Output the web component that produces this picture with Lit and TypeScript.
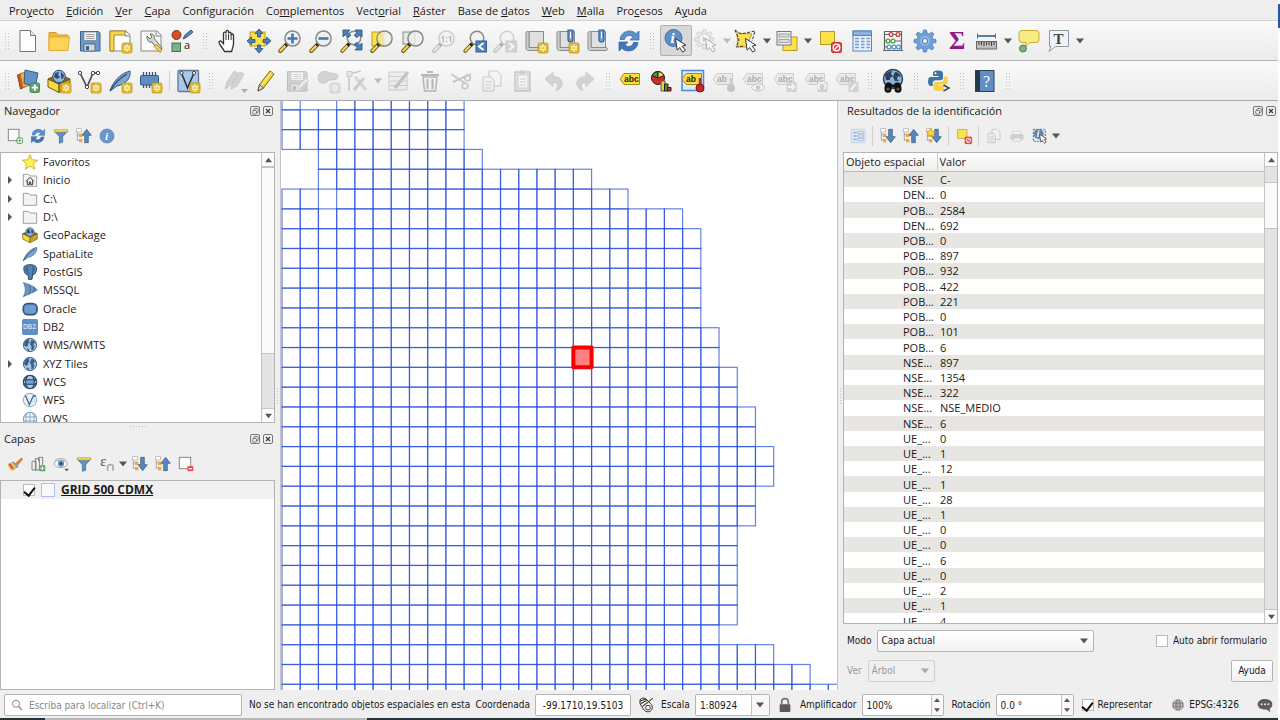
import { LitElement, html, css, svg, nothing, type TemplateResult } from "lit";
import { customElement } from "lit/decorators.js";
import { classMap } from "lit/directives/class-map.js";

type Glyph = ReturnType<typeof svg>;

/* ---------- shared icon pieces ---------- */
const badge = svg`
  <rect x="14" y="14" width="10" height="10" rx="1.6" fill="#e3bd2c" stroke="#b8941a" stroke-width=".8"/>
  <path d="M19 15.6v6.8M16 17.3l6 3.4M22 17.3l-6 3.4" stroke="#fff" stroke-width="1.3"/>
  <circle cx="19" cy="19" r="1.1" fill="#e3bd2c"/>`;
const plusBadge = svg`
  <rect x="14" y="14" width="9.5" height="9.5" rx="1.6" fill="#5fa570" stroke="#35784a" stroke-width=".8"/>
  <path d="M18.8 15.6v6.2M15.7 18.7h6.2" stroke="#fff" stroke-width="1.8"/>`;
const cursor = svg`<path d="M11.5 9.5l1.6 11.6 2.6-2.4 3 4.4 2.6-1.8-3-4.2 3.6-.9z" fill="#fff" stroke="#333" stroke-width="1" stroke-linejoin="round"/>`;
const lens = svg`
  <path d="M8.6 15.4L2.2 22" stroke="#6b5a1c" stroke-width="4" stroke-linecap="round"/>
  <path d="M8 16L2.4 21.8" stroke="#f6d94c" stroke-width="2.2" stroke-linecap="round"/>
  <path d="M9.3 14.7L7.4 16.6" stroke="#222" stroke-width="3.4"/>
  <circle cx="14.5" cy="9.5" r="7.6" fill="#eef0ee" fill-opacity=".8" stroke="#8a8a8a" stroke-width="1.5"/>`;
const smallLens = svg`
  <path d="M8.6 15.4L2.2 22" stroke="#6b5a1c" stroke-width="3.8" stroke-linecap="round"/>
  <path d="M8 16L2.4 21.8" stroke="#f6d94c" stroke-width="2" stroke-linecap="round"/>
  <path d="M9.3 14.7L7.4 16.6" stroke="#222" stroke-width="3.2"/>
  <circle cx="14" cy="9" r="6.8" fill="#f1f2f1" stroke="#8a8a8a" stroke-width="1.5"/>`;
const paper = svg`
  <path d="M5 2.500h14.500v17H5z" fill="#dfe1e0" stroke="#8a8a8a"/>
  <path d="M2 3.500c0-1.400 3-1.400 3 0v15H20.500c1.200 0 1.200 3 0 3H4.500c-1.600 0-2.500-1-2.500-2.500z" fill="#cfd2d1" stroke="#8a8a8a"/>`;
const clip = svg`<path d="M13 1h5v9.500a2.500 2.500 0 0 1-5 0z" fill="#6d9ad0" stroke="#315e94" stroke-width="1.200"/><path d="M15.500 3v6.500" stroke="#fff"/>`;
const globe = svg`
  <circle cx="12" cy="12" r="10" fill="#a9c6e6" stroke="#3b5f86" stroke-width="1.400"/>
  <path d="M4 7c2-3 5-4 7-4l-1 3 2 2-3 2v3l-3 2-3-3zM14 4c3 0 6 3 7 6l-3-1-1 3 2 2-2 5-3 1v-6l-2-3zM7 17l3 1 1 3-3-1z" fill="#3b5f86"/>`;
const labelTag = (t: string) => svg`
  <path d="M5 4.500h15.500v11H5L1 10z" fill="#fbdf3f" stroke="#a08a1c" stroke-linejoin="round"/>
  <text x="5" y="13" font-family="Liberation Sans" font-weight="bold" font-size="8.500" fill="#222">${t}</text>`;
const treeMark = svg`
  <path d="M2 3h7M2 3v16M2 10h5M2 18h5" stroke="#999" stroke-width="1.200" fill="none"/>
  <rect x="1" y="1" width="7" height="5" fill="#fff" stroke="#aaa"/>
  <rect x="4.500" y="8.500" width="5" height="5" fill="#f6a63c"/><rect x="4.500" y="16.500" width="5" height="5" fill="#f6a63c"/>`;
const arrowDown = svg`<path d="M13 2h5.500v11H23l-7 9-7-9h4z" fill="#5a86bb" stroke="#2f5680"/>`;
const arrowUp = svg`<path d="M13 22h5.500V11H23l-7-9-7 9h4z" fill="#5a86bb" stroke="#2f5680"/>`;
const refreshArrows = svg`
  <path d="M3 10.500C3.500 5.500 7.500 2 12.500 2c2.800 0 5 1 6.500 2.700L22 2v9h-9l3.200-3C13 5.500 8.500 6 7.500 10.500z" fill="#5c8fcc" stroke="#356aa8" stroke-width=".7"/>
  <path d="M21 13.500c-.5 5-4.500 8.500-9.500 8.500-2.800 0-5-1-6.500-2.700L2 22v-9h9l-3.200 3c3.200 2.500 7.700 2 8.700-2.500z" fill="#4478b8" stroke="#2d5f9c" stroke-width=".7"/>`;
const funnel = svg`
  <path d="M2 5h20l-7.500 8v8.500l-5 1.500V13z" fill="#5e8fc2" stroke="#3d6b9c"/>
  <path d="M2 2.500h20v3.500H2z" fill="#f7e05a" stroke="#b79b25"/>`;
const clipboardPage = svg`<path d="M9 2h8l4 4v11H9z" fill="#f6f6f6" stroke="#777"/><path d="M3 8h8l3 3v11H3z" fill="#eee" stroke="#777"/><path d="M5.500 13h6M5.500 16h6M5.500 19h6" stroke="#888"/>`;
const box = svg`
  <path d="M1 10l11 5v8.500L1 18z" fill="#f7d944" stroke="#6e5a0c"/><path d="M23 10l-11 5v8.500L23 18z" fill="#cda51d" stroke="#6e5a0c"/>
  <path d="M1 10l11-5 11 5-11 5z" fill="#856d16" stroke="#6e5a0c"/>
  <circle cx="12" cy="7.500" r="6.300" fill="#8fb3dc" stroke="#2d4d74"/><path d="M8 4l4-1-1 3 2 2-3 2-3-2zM14 3l3 3-1 4-2-1z" fill="#2d4d74"/>`;
const feather = svg`
  <path d="M2 22C5 13 11 5 22 2c1 6-3 13-13 15z" fill="#7ea6d2" stroke="#2f5a8c" stroke-linejoin="round"/>
  <path d="M2 22C6 15 12 9 19 5" stroke="#2f4a6c" stroke-width="1.300" fill="none"/>`;
const vMark = svg`
  <path d="M3 4l7 14L16 4h5" stroke="#444" stroke-width="1.600" fill="none"/>
  <circle cx="3" cy="4" r="1.700" fill="#fff" stroke="#444"/><circle cx="16" cy="4" r="1.700" fill="#fff" stroke="#444"/><circle cx="21" cy="4" r="1.700" fill="#fff" stroke="#444"/><circle cx="10" cy="18" r="1.700" fill="#fff" stroke="#444"/>`;
const pencil = svg`<path d="M4 22l1.500-6.500L16 2l4 3L9.500 19z" fill="#f4d63e" stroke="#7d6a1e"/><path d="M4 22l1.500-6.500 4 3.500z" fill="#ddd" stroke="#555"/><path d="M7 17L17.500 3.500" stroke="#fff08a"/>`;
const floppy = svg`
  <path d="M2.500 2.500h18l1.500 1.500v18h-19.500z" fill="#6e97c8" stroke="#3c658f"/>
  <rect x="6" y="3" width="12.500" height="8.500" fill="#f3f3f3" stroke="#6a7d92" stroke-width=".7"/><path d="M8 5.500h8.500M8 7.500h8.500M8 9.500h8.500" stroke="#888" stroke-width=".8"/>
  <rect x="6" y="15" width="11" height="7" fill="#d5d8da" stroke="#55708c"/><rect x="8" y="17" width="3" height="4" fill="#3c658f"/>`;
const square = svg`<rect x="2.500" y="2.500" width="14" height="13" fill="#fbe24a" stroke="#b99a1e"/>`;
const noEntry = svg`<rect x="13.500" y="13.500" width="10" height="10" rx="1.500" fill="#df4a4a" stroke="#c33"/><circle cx="18.500" cy="18.500" r="3.300" fill="none" stroke="#fff" stroke-width="1.300"/><path d="M16.300 20.700l4.400-4.400" stroke="#fff" stroke-width="1.300"/>`;
const info = svg`<circle cx="12" cy="12" r="10.500" fill="#6896cd" stroke="#4a79b0"/><text x="9" y="18" font-family="Liberation Serif" font-style="italic" font-weight="bold" font-size="17" fill="#fff">i</text>`;
const gearPath = "M10.500 1h3l.6 3.200 2 .8L18.800 3 21 5.200l-1.900 2.700.8 2L23 10.500v3l-3.100.6-.8 2 1.900 2.700-2.200 2.200-2.700-1.900-2 .8-.6 3.100h-3l-.6-3.100-2-.8L5.200 21 3 18.800l1.900-2.700-.8-2L1 13.500v-3l3.100-.6.8-2L3 5.200 5.200 3l2.700 1.900 2-.8z";
const folder = svg`<path d="M2 3.500h8l2 2.500h10v15.500H2z" fill="#f3f3f3" stroke="#9a9a9a" stroke-width="1.400" stroke-linejoin="round"/>`;

const ICONS: Record<string, Glyph> = {
  newProject: svg`<path d="M4 1.500h10.500l5 5v16H4z" fill="#fff" stroke="#777"/><path d="M14.500 1.500v5h5" fill="#eee" stroke="#777"/>`,
  open: svg`<path d="M2 3.500h7l2 2.500h10v4H6L2 21z" fill="#f0b93a" stroke="#d79b20"/><path d="M2 21.500V7l1 1h19.500l-1.500 13.500z" fill="#fcd558" stroke="#e2ad2d"/>`,
  save: floppy,
  newLayout: svg`<path d="M2 2h16l4 4v16H2z" fill="#fff" stroke="#888"/><path d="M2 2h16v4H6v16H2z" fill="#f9d951" stroke="#a8871c"/><path d="M17 2v5h5" fill="#eee" stroke="#888"/>${badge}`,
  layoutManager: svg`<path d="M2 2h16l4 4v16H2z" fill="#fafafa" stroke="#888"/><path d="M17 2v5h5" fill="#eee" stroke="#888"/><path d="M8 7l3 3 2-2-2-3c3-.5 5 2 4.300 4.500L23 19l-2.500 3.500L13 13c-3 .8-5.500-2-5-6z" fill="#d7d9da" stroke="#666"/><path d="M17 15.500l6 5-2 3-6-6z" fill="#f2d443" stroke="#8b7620" stroke-width=".7"/>`,
  styles: svg`<circle cx="6.500" cy="6" r="4.500" fill="#cf4f27" stroke="#8f3010"/><path d="M13 10l2-4 6-5 2 2-6 5z" fill="#5c88bd" stroke="#2f5680"/><rect x="2" y="14" width="8.500" height="8.500" fill="#79b188" stroke="#3c7750"/><text x="14" y="20" font-family="Open Sans" font-size="11" fill="#222">a</text>`,
  hand: svg`<path d="M8.500 22.500C7 19 3.500 16.500 3 13.500c-.2-1.600 1.500-2 2.500-.8l2 2V4.500c0-1.800 2.500-1.800 2.500 0V2.800c0-1.800 2.600-1.800 2.600 0v1.700c0-1.700 2.500-1.700 2.500 0v1.700c0-1.600 2.400-1.600 2.400 0v8.300c0 3-1.500 5-1.800 8z" fill="#fff" stroke="#333" stroke-width="1.300"/><path d="M10 5v6M12.600 5v6M15.100 6v5" stroke="#333"/>`,
  panSelection: svg`<rect x="3" y="3" width="15" height="14" fill="#fbe24a" stroke="#b99a1e"/><g fill="#4d7fb8" stroke="#274f7d" stroke-width=".8"><path d="M12 0l4 4.500h-2.500V8h-3V4.500H8zM12 24l4-4.500h-2.500V16h-3v3.500H8zM0 12l4.500-4v2.500H8v3H4.500V16zM24 12l-4.500-4v2.500H16v3h3.500V16z"/></g>`,
  zoomIn: svg`${lens}<path d="M14.500 4.500v10M9.500 9.500h10" stroke="#4478b4" stroke-width="2.600"/>`,
  zoomOut: svg`${lens}<path d="M9.500 9.500h10" stroke="#4478b4" stroke-width="2.600"/>`,
  zoomFull: svg`${smallLens}<g fill="#4d7fb8" stroke="#274f7d" stroke-width=".8"><path d="M3 1h7L7.800 3.200l3 3-2.600 2.600-3-3L3 8zM22 1v7l-2.200-2.200-3 3-2.600-2.600 3-3L15 1zM22 21h-7l2.200-2.200-3-3 2.600-2.600 3 3L22 14z"/></g>`,
  zoomSelection: svg`<rect x="2" y="3" width="12" height="14" fill="#fbe24a" stroke="#b99a1e"/>${lens}<path d="M9 5h5v11a7 7 0 0 1-5-11z" fill="#f5e58a"/>`,
  zoomLayer: svg`<rect x="2" y="3" width="12" height="12" fill="#e6e6e6" stroke="#8a8a8a"/>${lens}`,
  zoomNative: svg`${lens}<text x="8.500" y="12.800" font-family="Open Sans" font-weight="bold" font-size="8.500" fill="#444">1:1</text>`,
  zoomLast: svg`${smallLens}<rect x="13" y="12" width="10.500" height="11" fill="#4f82bd" stroke="#2f5f96"/><path d="M20.500 14l-4.500 3.500 4.500 3.500" stroke="#fff" stroke-width="2" fill="none"/>`,
  zoomNext: svg`${smallLens}<rect x="13" y="12" width="10.500" height="11" fill="#9a9a9a" stroke="#888"/><path d="M16 14l4.500 3.500L16 21" stroke="#fff" stroke-width="2" fill="none"/>`,
  newView: svg`${paper}${badge}`,
  newBookmark: svg`${paper}${clip}${badge}`,
  bookmarks: svg`${paper}${clip}`,
  refresh: refreshArrows,
  identify: svg`<circle cx="9.500" cy="9" r="8.500" fill="#5f8fc9" stroke="#3f70aa"/><text x="6.500" y="14" font-family="Liberation Serif" font-style="italic" font-weight="bold" font-size="15" fill="#fff">i</text>${cursor}`,
  action: svg`<g transform="scale(.86)"><path d="${gearPath}" fill="#ddd" stroke="#777"/></g><circle cx="10.300" cy="10.300" r="5.500" fill="#fff" stroke="#777"/><path d="M8.500 7l5 3.300-5 3.300z" fill="#888"/>${cursor}`,
  select: svg`<path d="M3 4l15 1-3 6 1 7H4z" fill="#fbe24a" stroke="#b99a1e"/><path d="M1 1l6 4 14-3-3 10M1 1l4 10-3 7 8-1" fill="none" stroke="#333" stroke-dasharray="3 1.500"/>${cursor}`,
  selectForm: svg`<rect x="8" y="8" width="14" height="13.500" fill="#fbe24a" stroke="#b99a1e"/><rect x="2" y="2.500" width="14" height="13.500" fill="#f0f0f0" stroke="#777"/><rect x="4" y="5" width="10" height="3" fill="#ddd" stroke="#888" stroke-width=".7"/><rect x="4" y="10.500" width="10" height="3" fill="#ddd" stroke="#888" stroke-width=".7"/>`,
  deselect: svg`${square}${noEntry}`,
  attributes: svg`<rect x="3" y="2" width="18.500" height="20" fill="#e9f2fc" stroke="#5584b8"/><rect x="3" y="2" width="18.500" height="4.500" fill="#8ab2e0" stroke="#5584b8"/><path d="M5 9.500h4M5 12.500h4M5 15.500h4M5 18.500h4M11 9.500h3.500M11 12.500h3.500M11 15.500h3.500M11 18.500h3.500M16.500 9.500H20M16.500 12.500H20M16.500 15.500H20M16.500 18.500H20" stroke="#6f9dd0" stroke-width="1.300"/>`,
  calculator: svg`<path d="M3.500 2v19M20.500 2v19M3.500 2.500h17M3.500 5.500h17M3.500 12h17M3.500 18h17M2 21.500h20" stroke="#666" stroke-width="1.200" fill="none"/><g fill="#fff" stroke-width="1.300"><g stroke="#cc3838"><circle cx="10" cy="5.500" r="1.900"/><circle cx="17" cy="5.500" r="1.900"/></g><g stroke="#46a548"><circle cx="7" cy="12" r="1.900"/><circle cx="12" cy="12" r="1.900"/></g><g stroke="#5692c7"><circle cx="8" cy="18" r="1.900"/><circle cx="13" cy="18" r="1.900"/><circle cx="17.500" cy="18" r="1.900"/></g></g>`,
  processing: svg`<path d="${gearPath}" fill="#6f9fd8" stroke="#4377ae" stroke-width=".7"/><circle cx="12" cy="12" r="5" fill="#8fb8e8"/><circle cx="12" cy="12" r="2.600" fill="#f4f6f8" stroke="#4377ae"/>`,
  sum: svg`<text x="4" y="20" font-family="Liberation Serif" font-weight="bold" font-size="25" fill="#92168c">Σ</text>`,
  measure: svg`<path d="M2 7h19" stroke="#3f729c" stroke-width="1.800"/><path d="M2.500 4.500v5M20.500 4.500v5" stroke="#3f729c"/><rect x="1.500" y="12.500" width="20" height="7.500" fill="#bdbdbd" stroke="#666"/><path d="M4 13v3M6.500 13v3M9 13v4M11.500 13v3M14 13v3M16.500 13v4M19 13v3" stroke="#444"/>`,
  tips: svg`<path d="M5 1.500h14a3 3 0 0 1 3 3v6a3 3 0 0 1-3 3h-6l-5 5 1-5H5a3 3 0 0 1-3-3v-6a3 3 0 0 1 3-3z" fill="#f9ec85" stroke="#c6a92f"/><circle cx="6" cy="19.500" r="3.500" fill="#7fb07f" stroke="#4f7f55"/>`,
  annotation: svg`<path d="M2.500 1.500h19v16h-13L2 22.500l2-5H2.500z" fill="#f1f4f6" stroke="#8c9aa3"/><text x="6.500" y="14.500" font-family="Liberation Serif" font-weight="bold" font-size="15" fill="#444">T</text>`,
  addLayer: svg`<path d="M1.500 6l9-2 2 12-8 4z" fill="#d2562a" stroke="#93360f"/><path d="M4 4.500l10-2 2 13-9 3z" fill="#f4b42e" stroke="#a8781a"/><path d="M9 1l13 3-2.500 13L8 14.500z" fill="#6592c6" stroke="#345f92"/>${plusBadge}`,
  geopackage: svg`${box}${badge}`,
  shapefile: svg`${vMark}${badge}`,
  spatialite: svg`${feather}${badge}`,
  memory: svg`<path d="M5.500 3v16M8.500 3v16M11.500 3v16M14.500 3v16M17.500 3v16" stroke="#34597f" stroke-width="1.300"/><rect x="2.500" y="6.500" width="18" height="9.500" rx="1" fill="#5f8dc2" stroke="#34597f"/>${badge}`,
  virtualLayer: svg`<rect x="2" y="1.500" width="20.500" height="21" rx="1" fill="#a9c9ea" stroke="#5f7894" stroke-width="1.300"/><path d="M5.500 4l6 15L18 4" stroke="#333" stroke-width="1.600" fill="none"/><circle cx="5.500" cy="4" r="1.600" fill="#fff" stroke="#444"/><circle cx="18" cy="4" r="1.600" fill="#fff" stroke="#444"/>${badge}`,
  edits: svg`<path d="M2 20l2-7L11 2l4 2-7 12zM8 20l2-7 7-10 4 2-7 12z" fill="#999" stroke="#777"/><path d="M18 20h7l-3.500 4z" fill="#333"/>`,
  toggleEdit: pencil,
  saveEdits: svg`${floppy}<path d="M12 18l9-9 2.500 2.500-9 9z" fill="#ddd" stroke="#888"/>`,
  addFeature: svg`<path d="M2 9c0-8 9-7 12-5 4 1 8 0 8 3 0 4-5 4-9 4-2 4-11 5-11-2z" fill="#999" stroke="#777"/>${badge}`,
  vertex: svg`<path d="M4 22V5l12-3" stroke="#777" fill="none" stroke-width="1.500"/><rect x="2" y="2.500" width="5" height="5" fill="#ccc" stroke="#777"/><path d="M10 8l11 13" stroke="#aaa" stroke-width="3.500"/><path d="M19 9L9 21" stroke="#888" stroke-width="3"/>`,
  modify: svg`<path d="M2 3h18v18H2z" fill="#e4e4d8" stroke="#888"/><path d="M2 7.500h18M2 12h18M2 16.500h18" stroke="#888"/><path d="M8 19L21 3" stroke="#666" stroke-width="3"/>`,
  remove: svg`<path d="M5 8h14l-1.500 14h-11z" fill="#eee" stroke="#a03030" stroke-width="1.500"/><path d="M3 6h18M9 3h6M9.500 10v10M14.500 10v10" stroke="#a03030" stroke-width="2"/>`,
  cut: svg`<path d="M2 5l14 9M4 13L22 5" stroke="#777" stroke-width="2"/><circle cx="18.500" cy="9" r="2.800" fill="none" stroke="#777" stroke-width="1.600"/><circle cx="16" cy="17" r="2.800" fill="none" stroke="#777" stroke-width="1.600"/>`,
  copy: clipboardPage,
  paste: svg`<rect x="4" y="3" width="15" height="19" fill="#ccc" stroke="#777" stroke-width="1.500"/><rect x="7" y="6" width="10" height="13" fill="#fff" stroke="#888"/><rect x="8.500" y="1.500" width="6" height="3.500" fill="#888"/><path d="M9 10h6M9 13h6M9 16h6" stroke="#888"/>`,
  undo: svg`<path d="M3 10l8-7v4.500c7 0 10 4 9 8s-3 5-6 6c2-4 3-8-3-8v4z" fill="#999" stroke="#888"/>`,
  redo: svg`<path d="M21 10l-8-7v4.500c-7 0-10 4-9 8s3 5 6 6c-2-4-3-8 3-8v4z" fill="#999" stroke="#888"/>`,
  label: labelTag("abc"),
  diagram: svg`<circle cx="8" cy="9" r="6.500" fill="#d82929" stroke="#222"/><path d="M8 9V2.500a6.500 6.500 0 0 0-6 4z" fill="#3b9c43" stroke="#222"/><path d="M8 9l6-2.500A6.500 6.500 0 0 0 8 2.500z" fill="#f2d73f" stroke="#222"/><path d="M11 12h4v10h-4z" fill="#e9d03c" stroke="#655"/><path d="M14.500 15h3.500v7h-3.500z" fill="#3b9c43" stroke="#222"/><path d="M17.500 18.500H21V22h-3.500z" fill="#d82929" stroke="#222"/>`,
  pinned: svg`<rect x="1" y="1.500" width="21.500" height="20" fill="#dbe9fa" stroke="#4d8ad6" stroke-width="1.500"/>${labelTag("ab")}<path d="M19 9v9" stroke="#a33" stroke-width="2.500"/><circle cx="19" cy="19" r="4" fill="#c22a2e" stroke="#7e1518"/>`,
  pinLabel: svg`${labelTag("ab")}<path d="M19 9v9" stroke="#888" stroke-width="2.500"/><circle cx="19" cy="19" r="4" fill="#777"/>`,
  showLabel: svg`${labelTag("abc")}<path d="M9 18.500c4-5 10-5 14 0-4 4.500-10 4.500-14 0z" fill="#fff" stroke="#666"/><circle cx="16" cy="18.500" r="2.200" fill="#777"/>`,
  moveLabel: svg`${labelTag("abc")}<rect x="13.500" y="13" width="10" height="10" fill="#999"/><path d="M15 18h6M18.500 15l3 3-3 3" stroke="#fff" stroke-width="1.800" fill="none"/>`,
  rotateLabel: svg`${labelTag("abc")}<rect x="13.500" y="13" width="10" height="10" fill="#999"/><path d="M16 20a3.500 3.500 0 1 1 4 0" stroke="#fff" stroke-width="1.800" fill="none"/>`,
  editLabel: svg`${labelTag("abc")}<rect x="13.500" y="13" width="10" height="10" fill="#999"/><path d="M15.500 21l5.500-6" stroke="#fff" stroke-width="2"/>`,
  metasearch: svg`<circle cx="12" cy="10" r="9.500" fill="#8fb0d4" stroke="#26405e" stroke-width="1.400"/><path d="M4 6c2-3 5-4 7-4l-1 3 2 2-3 2v2H5zM14 3c3 0 5 2 6 5l-3-1-1 3 2 2h-4l-2-4z" fill="#26405e"/><path d="M3.500 20c0-4 1-6.500 4-6.500h1.500l3 2.500 3-2.500h1.500c3 0 4 2.500 4 6.500a3.500 3.500 0 0 1-7 .5v-2h-3v2a3.500 3.500 0 0 1-7-.5z" fill="#111"/><circle cx="7" cy="20" r="1.600" fill="#555"/><circle cx="17" cy="20" r="1.600" fill="#555"/>`,
  python: svg`<path d="M11 1.500c-4 0-5 1.200-5 3.200V7h5.500v1H4c-2.200 0-3 2-3 4.500S2 17 4 17h1.700v-2.800c0-2 1.500-3 3.300-3h4.500c1.500 0 2.500-1 2.500-2.500v-4c0-2-1.500-3.200-5-3.200z" fill="#3c74a6"/><circle cx="8.500" cy="4.300" r="1" fill="#fff"/><path d="M12 22c4 0 5-1.200 5-3.200v-2.300h-5.500v-1H18c2.200 0 3-1.500 3-4s-1-4-3-4h-1.200v2.500c0 2-1.500 3-3.300 3H9c-1.500 0-2.500 1-2.500 2.500V19c0 2 2 3 5.500 3z" fill="#fbd043"/><path d="M16.500 16l5.500 3-5.500 3" stroke="#444" stroke-width="1.500" fill="none"/>`,
  help: svg`<rect x="2.500" y="1.500" width="18.500" height="21" fill="#5f8dc4" stroke="#2c4258"/><rect x="2.500" y="1.500" width="4.500" height="21" fill="#26384a"/><text x="10" y="17.500" font-family="Liberation Serif" font-size="16" fill="#fff">?</text>`,
  /* panel icons */
  addSelected: svg`<rect x="2" y="2" width="16" height="17" fill="#fafafa" stroke="#888" stroke-width="1.500"/><rect x="15" y="15" width="8" height="8" rx="1.500" fill="#fff" stroke="#4d9a5e" stroke-width="1.500"/><path d="M19 17v4M17 19h4" stroke="#4d9a5e" stroke-width="1.500"/>`,
  filter: funnel,
  collapse: svg`${treeMark}${arrowUp}`,
  expand: svg`${treeMark}${arrowDown}`,
  expandNew: svg`${treeMark}${arrowDown}<path d="M7 0l2 4.500 5 .5-3.700 3.200L11.500 13 7 10.500 2.500 13l1.200-4.800L0 5l5-.5z" fill="#fbd93a" stroke="#c39a17"/>`,
  info,
  brush: svg`<path d="M12 12L22 3l1 2-8 10z" fill="#e88a2c" stroke="#a5591a"/><path d="M2 12l8-3 7 6-7 6c-4 1-7-3-8-9z" fill="#f3c74a" stroke="#c99a30"/><path d="M9 9l7 8" stroke="#6f9bd0" stroke-width="2.500"/><path d="M4 12l5 7" stroke="#cf4b3b" stroke-width="3"/>`,
  addGroup: svg`<path d="M3 8h6v13H3zM8 4h6v17H8zM13 8V2h6v14" fill="#f2f2f2" stroke="#777" stroke-width="1.400"/><rect x="14" y="14" width="9" height="9" rx="1" fill="#5fa570"/><path d="M18.500 15.500v6M15.500 18.500h6" stroke="#fff" stroke-width="1.600"/>`,
  eye: svg`<path d="M1 12C6 4 17 4 22 12c-5 7-16 7-21 0z" fill="#fff" stroke="#999" stroke-width="1.400"/><circle cx="12" cy="11.500" r="4.600" fill="#5f8cb8"/><circle cx="12" cy="11.500" r="1.800" fill="#333"/><path d="M2 8C7 2 17 2 21 8" stroke="#aaa" fill="none" stroke-width="1.400"/><path d="M17 19h7l-3.500 4z" fill="#555"/>`,
  expression: svg`<text x="2" y="15" font-family="Liberation Serif" font-size="22" fill="#6d3a63">ε</text><path d="M13 22v-6c0-4 8-4 8 0v6" fill="none" stroke="#aaa" stroke-width="2.600"/>`,
  removeLayer: svg`<rect x="2" y="2" width="17" height="17" fill="#fafafa" stroke="#888" stroke-width="1.500"/><rect x="14" y="15" width="9" height="8" rx="1.500" fill="#e2505b"/><path d="M16 19h5" stroke="#fff" stroke-width="1.700"/>`,
  formView: svg`<rect x="1.500" y="2" width="21" height="20" rx="1.500" fill="#dbe8f6" stroke="#b7cbe2"/><path d="M5 7h5M5 12h5M5 17h5" stroke="#7794b5" stroke-width="1.400"/><path d="M12 5.500h8v3h-8zM12 10.500h8v3h-8zM12 15.500h8v3h-8z" fill="#fff" stroke="#7f9fc4"/>`,
  print: svg`<path d="M6 10V5h12v5" fill="#fff" stroke="#999"/><rect x="2" y="9" width="20" height="9" rx="3" fill="#aaa"/><path d="M6 15h12v5H6z" fill="#eee" stroke="#999"/>`,
  identifyMode: svg`<rect x="2" y="2" width="18" height="18" fill="#dfe6ee" stroke="#667" stroke-dasharray="3 2" stroke-width="1.400"/><circle cx="10" cy="9" r="7.500" fill="#5f86b4"/><text x="7" y="14" font-family="Liberation Serif" font-style="italic" font-weight="bold" font-size="14" fill="#fff">i</text>${cursor}`,
  /* browser tree */
  star: svg`<path d="M12 1l3.200 7.700 8.300.6-6.400 5.300 2 8.200L12 18.300l-7.100 4.500 2-8.200L.5 9.300l8.300-.6z" fill="#fdf05c" stroke="#c8ab20" stroke-width="1.300"/>`,
  home: svg`${folder}<path d="M6 14l6-6 6 6M8 13v6h3v-4h2v4h3v-6" fill="none" stroke="#333" stroke-width="1.500"/>`,
  folder,
  box,
  feather,
  postgis: svg`<path d="M3 4c4-4 14-4 18 0 2 4 0 9-3 12l-2-1-1 8h-5l-1-7c-4 1-7-5-6-12z" fill="#5583b3" stroke="#27486e" stroke-width="1.500"/><path d="M8 4c-2 4 0 8 2 10M16 4c2 3 1 7-1 10" stroke="#27486e" stroke-width="1.500" fill="none"/>`,
  mssql: svg`<path d="M2 1c8 2 16 5 21 11C16 16 8 19 2 22c4-7 4-14 0-21z" fill="#6a96c8" stroke="#35618f"/><path d="M10 4c3 5 3 10 0 15M17 7c2 4 2 6 0 9" stroke="#35618f" fill="none" stroke-width="1.300"/>`,
  oracle: svg`<rect x="2" y="4" width="20.500" height="16.500" rx="6.500" fill="#6f9bcf" stroke="#2f5680" stroke-width="2.500"/>`,
  db2: svg`<rect x="0" y="0" width="24" height="24" rx="2.500" fill="#5f8fc6"/><text x="1.500" y="15.500" font-family="Open Sans" font-size="10" fill="#fff">DB2</text>`,
  globe,
  wcs: svg`<circle cx="12" cy="12" r="10" fill="#a9c6e6" stroke="#2c4a6b" stroke-width="1.800"/><path d="M2 9h20M2 15h20M8 3c-3 6-3 12 0 18M16 3c3 6 3 12 0 18" stroke="#2c4a6b" fill="none" stroke-width="2"/><rect x="6" y="9" width="12" height="6" fill="#7da5d2" stroke="#2c4a6b"/>`,
  wfs: svg`<circle cx="12" cy="12" r="10" fill="#eaf2fa" stroke="#7e9fc2" stroke-width="1.400"/><path d="M5 5l6 14L17 6h4" stroke="#41658d" stroke-width="2" fill="none"/><path d="M15 10h5M14 14h6" stroke="#9fbadb"/>`,
  ows: svg`<circle cx="12" cy="12" r="10" fill="#f1f6fb" stroke="#7e9fc2" stroke-width="1.600"/><path d="M2 9h20M2 15h20M12 2v20M8 3c-3 6-3 12 0 18M16 3c3 6 3 12 0 18" stroke="#7e9fc2" fill="none" stroke-width="1.300"/>`,
  /* status bar */
  extents: svg`<path d="M3 4c2-3 7-3 9-1l7 7c4 4 3 10-2 12-4 1-7-1-9-4L3 10z" fill="#eee" stroke="#333" stroke-width="1.500"/><path d="M3 6l9-3M4 10l9-5M7 14L22 2" stroke="#333" stroke-width="1.700"/><circle cx="15" cy="16" r="3.500" fill="#fff" stroke="#333" stroke-width="1.500"/>`,
  lock: svg`<path d="M7 11V7c0-6 10-6 10 0v4" stroke="#777" stroke-width="2.500" fill="none"/><rect x="4" y="11" width="16" height="11.500" rx="1" fill="#5a5a5a"/>`,
  crs: svg`<circle cx="12" cy="12" r="10" fill="#777"/><path d="M2 12h20M12 2v20M4 6.500h16M4 17.500h16M8 3c-3 6-3 12 0 18M16 3c3 6 3 12 0 18" stroke="#ddd" fill="none"/>`,
  messages: svg`<path d="M12 3c6 0 11 3 11 8 0 3-1 5-4 6.500L20 23l-5.500-4.200C6 19.500 1 16 1 11s5-8 11-8z" fill="#5c5c5c"/><circle cx="7" cy="11" r="1.500" fill="#eee"/><circle cx="12" cy="11" r="1.500" fill="#eee"/><circle cx="17" cy="11" r="1.500" fill="#eee"/>`,
  search: svg`<circle cx="10" cy="9.500" r="7" fill="none" stroke="#8a8a8a" stroke-width="2"/><path d="M15 15l7 7" stroke="#8a8a8a" stroke-width="2.600"/>`,
  undock: svg`<rect x="8" y="4" width="11" height="11" rx="2" fill="none" stroke="#555" stroke-width="2"/><rect x="4.500" y="9" width="10" height="10" rx="2" fill="#eee" stroke="#555" stroke-width="2"/>`,
  close: svg`<path d="M6 6l12 12M18 6L6 18" stroke="#444" stroke-width="4"/>`,
};

const icon = (name: string, size = 24) =>
  html`<svg viewBox="0 0 24 24" width=${size} height=${size} aria-hidden="true">${ICONS[name]}</svg>`;
const caret = (dir: "down" | "up" | "right" = "down") =>
  html`<svg class="caret" viewBox="0 0 8 8" width="8" height="8" aria-hidden="true">
    ${dir === "down" ? svg`<path d="M0 1.500h8L4 6.500z"/>` : dir === "up" ? svg`<path d="M0 6.500h8L4 1.500z"/>` : svg`<path d="M2 0v8l4-4z"/>`}
  </svg>`;

interface Tool { icon: string; label: string; off?: boolean; menu?: boolean; on?: boolean; sep?: boolean }
interface Group { width: number; tools: Tool[] }
const t = (icon: string, label: string, extra: Partial<Tool> = {}): Tool => ({ icon, label, ...extra });
const off = { off: true };
const menu = { menu: true };

const BAR_ONE: Group[] = [
  { width: 184, tools: [t("newProject", "Nuevo"), t("open", "Abrir"), t("save", "Guardar"), t("newLayout", "Nueva composición"), t("layoutManager", "Administrador de composiciones"), t("styles", "Administrador de estilos")] },
  { width: 431, tools: [t("hand", "Desplazar mapa"), t("panSelection", "Desplazar a la selección"), t("zoomIn", "Acercar"), t("zoomOut", "Alejar"), t("zoomFull", "Zum general"), t("zoomSelection", "Zum a la selección"), t("zoomLayer", "Zum a la capa"), t("zoomNative", "Zum nativo", off), t("zoomLast", "Zum anterior"), t("zoomNext", "Zum siguiente", off), t("newView", "Nueva vista"), t("newBookmark", "Nuevo marcador"), t("bookmarks", "Marcadores"), t("refresh", "Actualizar")] },
  { width: 426, tools: [t("identify", "Identificar", { on: true }), t("action", "Acción", { off: true, menu: true }), t("select", "Seleccionar", menu), t("selectForm", "Seleccionar por formulario", menu), t("deselect", "Deseleccionar"), t("attributes", "Tabla de atributos"), t("calculator", "Calculadora de campos"), t("processing", "Caja de herramientas"), t("sum", "Estadísticas"), t("measure", "Medir", menu), t("tips", "Avisos"), t("annotation", "Anotación", menu)] },
];
const BAR_TWO: Group[] = [
  { width: 190, tools: [t("addLayer", "Añadir capa"), t("geopackage", "Nuevo GeoPackage"), t("shapefile", "Nuevo archivo shape"), t("spatialite", "Nueva SpatiaLite"), t("memory", "Nueva capa temporal"), t("virtualLayer", "Nueva capa virtual", { sep: true })] },
  { width: 381, tools: [t("edits", "Ediciones actuales", off), t("toggleEdit", "Conmutar edición"), t("saveEdits", "Guardar ediciones", off), t("addFeature", "Añadir objeto", off), t("vertex", "Herramienta de vértices", { off: true, menu: true }), t("modify", "Modificar atributos", off), t("remove", "Borrar", off), t("cut", "Cortar", off), t("copy", "Copiar", off), t("paste", "Pegar", off), t("undo", "Deshacer", off), t("redo", "Rehacer", off)] },
  { width: 246, tools: [t("label", "Etiquetado"), t("diagram", "Diagramas"), t("pinned", "Resaltar etiquetas"), t("pinLabel", "Fijar etiqueta", off), t("showLabel", "Mostrar etiqueta", off), t("moveLabel", "Mover etiqueta", off), t("rotateLabel", "Rotar etiqueta", off), t("editLabel", "Cambiar etiqueta", off)] },
  { width: 30, tools: [t("metasearch", "MetaSearch")] },
  { width: 30, tools: [t("python", "Consola de Python")] },
  { width: 30, tools: [t("help", "Contenido de la ayuda")] },
  { width: 30, tools: [] },
];

/* label split around its access key */
const MENUS: [string, string, string][] = [
  ["Pro", "y", "ecto"], ["", "E", "dición"], ["", "V", "er"], ["", "C", "apa"], ["Confi", "g", "uración"], ["Co", "m", "plementos"],
  ["Vect", "o", "rial"], ["", "R", "áster"], ["Base de ", "d", "atos"], ["", "W", "eb"], ["", "M", "alla"], ["Pro", "c", "esos"], ["A", "y", "uda"],
];
const TREE: [string, string, boolean][] = [
  ["star", "Favoritos", false], ["home", "Inicio", true], ["folder", "C:\\", true], ["folder", "D:\\", true], ["box", "GeoPackage", false],
  ["feather", "SpatiaLite", false], ["postgis", "PostGIS", false], ["mssql", "MSSQL", false], ["oracle", "Oracle", false], ["db2", "DB2", false],
  ["globe", "WMS/WMTS", false], ["globe", "XYZ Tiles", true], ["wcs", "WCS", false], ["wfs", "WFS", false], ["ows", "OWS", false],
];
const RESULTS: [string, string][] = [
  ["NSE", "C-"], ["DEN...", "0"], ["POB...", "2584"], ["DEN...", "692"], ["POB...", "0"], ["POB...", "897"], ["POB...", "932"], ["POB...", "422"],
  ["POB...", "221"], ["POB...", "0"], ["POB...", "101"], ["POB...", "6"], ["NSE...", "897"], ["NSE...", "1354"], ["NSE...", "322"],
  ["NSE...", "NSE_MEDIO"], ["NSE...", "6"], ["UE_...", "0"], ["UE_...", "1"], ["UE_...", "12"], ["UE_...", "1"], ["UE_...", "28"], ["UE_...", "1"],
  ["UE_...", "0"], ["UE_...", "0"], ["UE_...", "6"], ["UE_...", "0"], ["UE_...", "2"], ["UE_...", "1"], ["UE_...", "4"],
];

/* first and last column of the cells in each row of the layer, top to bottom */
const ROWS: [number, number][] = [
  [0, 10], [0, 10], [0, 10], [2, 11], [2, 17], [0, 19], [0, 22], [0, 23], [0, 23], [0, 23], [0, 23], [0, 23], [0, 24], [0, 24], [0, 25], [0, 25],
  [0, 26], [0, 26], [0, 27], [0, 27], [0, 26], [0, 26], [0, 25], [0, 25], [0, 25], [0, 25], [0, 25], [0, 24], [0, 27], [0, 29], [0, 31],
];
const HOLES = new Set(["0:1", "0:2", "5:2"]);
const CELL_W = 18.21;
const CELL_H = 19.81;
const ORIGIN_X = 1;
const ORIGIN_Y = -11;

@customElement("app-root")
export class AppRoot extends LitElement {
  static styles = css`
    :host { display: grid; grid-template-rows: 20px 40px 40px minmax(0, 1fr) 28px 2px; height: 100vh; padding-right: 2px; box-sizing: border-box;
      background: #fff; color: #1a1a1a; font: 11px/16px "Open Sans", sans-serif; position: relative; overflow: hidden; }
    * { box-sizing: border-box; }
    svg { display: block; flex: none; overflow: visible; }
    button, input, select { font: inherit; color: inherit; margin: 0; }
    button { padding: 0; border: 0; background: none; display: flex; align-items: center; justify-content: center; }
    .edge { position: absolute; right: 0; top: 4px; width: 2px; height: 24px; background: #2b579a; }
    .caret { fill: #555; }

    .menus { display: flex; align-items: center; gap: 12px; padding: 2px 9px 0; background: #eee; }
    .menus button { line-height: 18px; white-space: pre; }
    .key { text-decoration: underline; }

    .bar { display: flex; background: linear-gradient(#fafafa, #ebebeb); border-top: 1px solid #d2d2d2; }
    .bar + .bar { border-color: #b5b5b5; }
    .grip { width: 16px; flex: none; display: flex; align-items: center; justify-content: center; }
    .grip:first-child { width: 13px; }
    .grip::before { content: ""; width: 6px; height: 18px; background: radial-gradient(circle, #c2c2c2 0 .8px, transparent 1px) 0 0 / 3px 3px; }
    .group { display: flex; align-items: center; flex: none; }
    .tool { flex: 1 1 0; height: 31px; border: 1px solid transparent; border-radius: 2px; }
    .tool.menu { flex-basis: 11px; gap: 5px; }
    .tool.on { background: #d8d8d8; border-color: #b0b0b0; }
    .tool:disabled svg { filter: grayscale(1); opacity: .35; }
    .sep { width: 1px; height: 20px; margin: 0 3px; background: #d0d0d0; flex: none; }

    .work { display: grid; grid-template-columns: 275px 6px minmax(0, 1fr) 6px 435px; min-height: 0; background: #efefef; border-top: 1px solid #a9a9a9; }
    .side { display: flex; flex-direction: column; min-height: 0; min-width: 0; }
    .split { display: flex; align-items: center; justify-content: center; border-right: 1px solid #c4c4c4; }
    .split.right { border-right: 0; border-left: 1px solid #c4c4c4; }
    .dots { width: 3px; height: 18px; background: radial-gradient(circle, #bbb 0 .7px, transparent 1px) 0 0 / 3px 3px; }
    .dots.flat { width: 18px; height: 3px; }
    .hsplit { height: 6px; flex: none; display: flex; align-items: center; justify-content: center; }

    .title { display: flex; align-items: center; gap: 3px; height: 20px; padding: 0 2px 0 4px; flex: none; }
    .title h2 { flex: 1; margin: 0; font: inherit; }
    .title button { width: 10px; height: 10px; border: 1px solid #777; border-radius: 2px; }
    .tools { display: flex; align-items: center; height: 31px; padding: 0 3px 2px; flex: none; }
    .tools button { width: 23px; height: 23px; }
    .tools button.arrow { width: 10px; }
    .tools button:disabled svg { filter: grayscale(1); opacity: .45; }
    .browser { flex: 0 0 322px; display: flex; flex-direction: column; min-height: 0; }
    .capas { flex: 1; display: flex; flex-direction: column; min-height: 0; }
    .frame { flex: 1; min-height: 0; display: flex; overflow: hidden; background: #fff; border: 1px solid #b4b4b4; }

    .tree { flex: 1; list-style: none; margin: 0; padding: 0; height: 275px; display: grid; grid-auto-rows: 1fr; }
    .tree li { display: flex; align-items: center; gap: 5px; padding-left: 5px; }
    .twist { width: 11px; }
    .layers { flex: 1; list-style: none; margin: 0; padding: 0; }
    .layers li { display: flex; align-items: center; height: 18px; padding-left: 22px; background: #f0f0f0; }
    .layers label { display: flex; align-items: center; gap: 6px; font: bold 12px/16px "Open Sans", sans-serif; text-decoration: underline; }
    .swatch { width: 14px; height: 14px; border: 1px solid #a9bdf0; background: #f6f8fe; }

    input[type="checkbox"] { appearance: none; width: 12px; height: 12px; border: 1px solid #b9b9b9; background: #fff; flex: none; display: grid; place-items: center; }
    input[type="checkbox"]:checked::before { content: ""; width: 5px; height: 9px; border: solid #111; border-width: 0 2px 2px 0; rotate: 38deg; margin-bottom: 3px; }

    .scroll { width: 13px; flex: none; display: flex; flex-direction: column; background: #e3e3e3; border-left: 1px solid #c4c4c4; }
    .scroll button { height: 14px; flex: none; background: #fbfbfb; }
    .scroll button:first-child { border-bottom: 1px solid #c4c4c4; }
    .scroll button:last-child { border-top: 1px solid #c4c4c4; }
    .scroll .caret { width: 7px; }
    .thumb { background: #fafafa; border: solid #c4c4c4; border-width: 1px 0; }

    .map { width: 100%; height: 100%; background: #fff; min-width: 0; overflow: hidden; }
    .cell { fill: none; stroke: #2a50dc; stroke-opacity: .72; stroke-width: 1.2; }
    .hit { fill: #ff8080; stroke: #f60000; stroke-width: 4; stroke-linejoin: round; }

    .grid { flex: 1; min-width: 0; overflow: hidden; }
    table { width: 100%; height: 476px; border-collapse: collapse; table-layout: fixed; }
    th { width: 93px; height: 18px; padding: 0 2px; font-weight: normal; text-align: left; line-height: 18px; background: linear-gradient(#fff, #eee); border-bottom: 1px solid #bcbcbc; }
    th + th { width: auto; border-left: 1px solid #ccc; }
    td { padding: 0 0 0 3px; line-height: 15px; white-space: nowrap; }
    td:first-child { padding-left: 59px; }
    tbody tr:nth-child(odd) { background: #e7e6e2; }

    .small { font: 10px/14px "DejaVu Sans Condensed", "DejaVu Sans", sans-serif; }
    .form { display: flex; flex-direction: column; gap: 8px; padding: 6px 5px 8px 4px; flex: none; }
    .line { display: flex; align-items: center; gap: 6px; }
    .line .push { margin-left: auto; }
    .check { display: flex; align-items: center; gap: 5px; }
    .check.push { margin-right: 6px; }
    .drop { display: grid; align-items: center; }
    .drop > * { grid-area: 1 / 1; }
    .drop .caret { justify-self: end; margin-right: 6px; pointer-events: none; }
    .drop select, .push-btn, .field { height: 22px; border: 1px solid #b5b5b5; border-radius: 2px; background: linear-gradient(#fff, #f2f2f2); }
    .drop select { appearance: none; width: 100%; padding: 0 3px; outline: 0; }
    .mode { width: 217px; }
    .view { width: 67px; color: #999; opacity: 1; }
    .view select { opacity: 1; background: #f0f0f0; border-color: #cfcfcf; }
    .view .caret { fill: #aaa; }
    .dim { color: #999; }
    .push-btn { width: 42px; }

    .status { display: flex; align-items: center; gap: 5px; padding: 2px 5px 0 4px; background: #efefef; }
    .status .field { display: flex; align-items: center; background: #fff; flex: none; overflow: hidden; }
    .field input { border: 0; outline: 0; background: none; flex: 1; min-width: 0; padding: 0 4px; height: 20px; }
    .find { width: 238px; padding-left: 6px; }
    .find input { padding-left: 6px; }
    .find input::placeholder { color: #888; opacity: 1; }
    .note { flex: 1; min-width: 0; white-space: nowrap; overflow: hidden; margin-left: 2px; }
    .coord { width: 96px; }
    .coord input { text-align: center; padding: 0 2px; }
    .scale { width: 75px; }
    .ampl { width: 82px; }
    .rot { width: 78px; }
    .field + label { margin-left: 3px; }
    .tick { margin: 0 2px; }
    .opener { width: 18px; align-self: stretch; border-left: 1px solid #c4c4c4; background: #f8f8f8; }
    .spin { width: 12px; align-self: stretch; border-left: 1px solid #c4c4c4; background: #f8f8f8; display: flex; flex-direction: column; }
    .spin button { flex: 1; }
    .spin .caret { width: 6px; }
    .status .check { margin-right: 14px; gap: 4px; }
    .crs { gap: 4px; margin-right: 13px; }
    .foot { background: linear-gradient(90deg, #26323a 0 45px, #b9b9b9 45px 367px, #26323a 367px); }
  `;

  private grip() { return html`<span class="grip"></span>`; }

  private bar(groups: Group[], label: string) {
    return html`<div class="bar" role="toolbar" aria-label=${label}>
      ${groups.map((g) => html`${this.grip()}<div class="group" style="width:${g.width}px">
        ${g.tools.map((x) => html`${x.sep ? html`<span class="sep"></span>` : nothing}<button
          class=${classMap({ tool: true, menu: !!x.menu, on: !!x.on })} ?disabled=${x.off} aria-label=${x.label}>${icon(x.icon)}${x.menu ? caret() : nothing}</button>`)}
      </div>`)}
    </div>`;
  }

  private title(text: string) {
    return html`<header class="title"><h2>${text}</h2>
      <button aria-label="Desacoplar">${icon("undock", 9)}</button><button aria-label="Cerrar">${icon("close", 8)}</button></header>`;
  }

  private tools(items: (Tool | "|" | "v")[]) {
    return html`<div class="tools">${items.map((x) => x === "|" ? html`<span class="sep"></span>`
      : x === "v" ? html`<button class="arrow" aria-label="Más opciones">${caret()}</button>`
      : html`<button ?disabled=${x.off} aria-label=${x.label}>${icon(x.icon, 16)}</button>`)}</div>`;
  }

  private scroll(before: number, thumb: number, after: number): TemplateResult {
    return html`<div class="scroll"><button aria-label="Subir">${caret("up")}</button>
      <div style="flex:${before}"></div><div class="thumb" style="flex:${thumb}"></div><div style="flex:${after}"></div>
      <button aria-label="Bajar">${caret()}</button></div>`;
  }

  private map() {
    const cells = ROWS.flatMap(([from, to], r) =>
      Array.from({ length: to - from }, (_, i) => from + i)
        .filter((c) => !HOLES.has(`${r}:${c}`))
        .map((c) => svg`<rect class="cell" x=${ORIGIN_X + c * CELL_W} y=${ORIGIN_Y + r * CELL_H} width=${CELL_W} height=${CELL_H}/>`));
    return html`<svg class="map" role="img" aria-label="Mapa">${cells}
      ${svg`<rect class="hit" x=${ORIGIN_X + 16 * CELL_W} y=${ORIGIN_Y + 13 * CELL_H} width=${CELL_W} height=${CELL_H}/>`}</svg>`;
  }

  render() {
    return html`
      <nav class="menus">${MENUS.map(([a, k, b]) => html`<button><span>${a}<span class="key">${k}</span>${b}</span></button>`)}</nav>
      ${this.bar(BAR_ONE, "Proyecto y navegación")}
      ${this.bar(BAR_TWO, "Capas y edición")}
      <main class="work">
        <div class="side">
          <section class="browser">
            ${this.title("Navegador")}
            ${this.tools([t("addSelected", "Añadir capas"), t("refresh", "Actualizar"), t("filter", "Filtrar"), t("collapse", "Plegar todo"), t("info", "Propiedades")])}
            <div class="frame">
              <ul class="tree">${TREE.map(([i, name, open]) => html`<li><span class="twist">${open ? caret("right") : nothing}</span>${icon(i, 16)}<span>${name}</span></li>`)}</ul>
              ${this.scroll(0, 186, 54)}
            </div>
          </section>
          <div class="hsplit"><span class="dots flat"></span></div>
          <section class="capas">
            ${this.title("Capas")}
            ${this.tools([t("brush", "Estilo"), t("addGroup", "Añadir grupo"), t("eye", "Visibilidad"), t("filter", "Filtrar"), t("expression", "Filtrar por expresión"), "v", t("expand", "Desplegar todo"), t("collapse", "Plegar todo"), t("removeLayer", "Eliminar capa")])}
            <div class="frame">
              <ul class="layers"><li><label><input type="checkbox" checked><span class="swatch"></span><span>GRID 500 CDMX</span></label></li></ul>
            </div>
          </section>
        </div>
        <div class="split"><span class="dots"></span></div>
        ${this.map()}
        <div class="split right"><span class="dots"></span></div>
        <section class="side">
          ${this.title("Resultados de la identificación")}
          ${this.tools([t("formView", "Ver formulario"), "|", t("expand", "Desplegar árbol"), t("collapse", "Plegar árbol"), t("expandNew", "Desplegar nuevos"), "|", t("deselect", "Limpiar resultados"), "|", t("copy", "Copiar", off), t("print", "Imprimir", off), t("identifyMode", "Modo de identificación"), "v"])}
          <div class="frame">
            <div class="grid"><table>
              <thead><tr><th>Objeto espacial</th><th>Valor</th></tr></thead>
              <tbody>${RESULTS.map(([k, v]) => html`<tr><td>${k}</td><td>${v}</td></tr>`)}</tbody>
            </table></div>
            ${this.scroll(15, 45, 382)}
          </div>
          <div class="form small">
            <div class="line"><label for="mode">Modo</label>
              <span class="drop mode"><select id="mode"><option>Capa actual</option></select>${caret()}</span>
              <label class="check push"><input type="checkbox">Auto abrir formulario</label></div>
            <div class="line"><label class="dim" for="view">Ver</label>
              <span class="drop view"><select id="view" disabled><option>Árbol</option></select>${caret()}</span>
              <button class="push-btn push">Ayuda</button></div>
          </div>
        </section>
      </main>
      <footer class="status small">
        <span class="field find">${icon("search", 12)}<input type="search" aria-label="Localizar" placeholder="Escriba para localizar (Ctrl+K)"></span>
        <span class="note">No se han encontrado objetos espaciales en esta</span>
        <label for="coord">Coordenada</label>
        <span class="field coord"><input id="coord" value="-99.1710,19.5103"></span>
        <button class="tick" aria-label="Extensión">${icon("extents", 16)}</button>
        <label for="scale">Escala</label>
        <span class="field scale"><input id="scale" value="1:80924"><button class="opener" aria-label="Escalas">${caret()}</button></span>
        <button class="tick" aria-label="Bloquear escala">${icon("lock", 16)}</button>
        <label for="ampl">Amplificador</label>
        <span class="field ampl"><input id="ampl" value="100%"><span class="spin"><button aria-label="Aumentar">${caret("up")}</button><button aria-label="Reducir">${caret()}</button></span></span>
        <label for="rot">Rotación</label>
        <span class="field rot"><input id="rot" value="0.0 °"><span class="spin"><button aria-label="Aumentar">${caret("up")}</button><button aria-label="Reducir">${caret()}</button></span></span>
        <label class="check"><input type="checkbox" checked>Representar</label>
        <button class="crs">${icon("crs", 14)}EPSG:4326</button>
        <button aria-label="Mensajes">${icon("messages", 16)}</button>
      </footer>
      <div class="foot"></div>
      <span class="edge"></span>`;
  }
}
